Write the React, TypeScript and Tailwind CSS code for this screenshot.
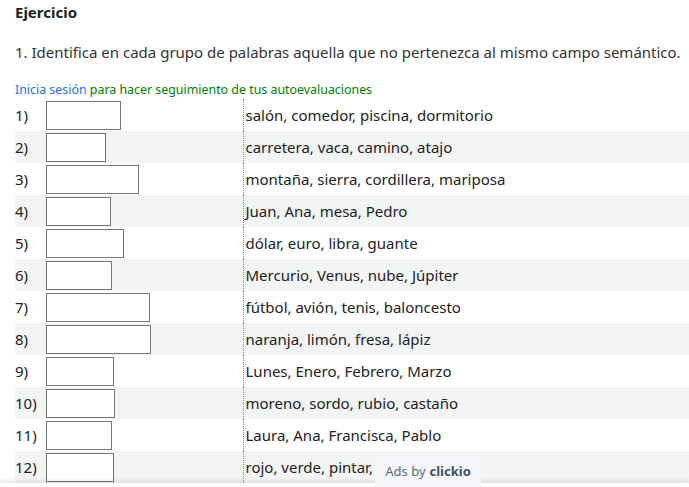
const rows: [number, string][] = [
  [75, "salón, comedor, piscina, dormitorio"],
  [60, "carretera, vaca, camino, atajo"],
  [93, "montaña, sierra, cordillera, mariposa"],
  [65, "Juan, Ana, mesa, Pedro"],
  [78, "dólar, euro, libra, guante"],
  [66, "Mercurio, Venus, nube, Júpiter"],
  [104, "fútbol, avión, tenis, baloncesto"],
  [105, "naranja, limón, fresa, lápiz"],
  [68, "Lunes, Enero, Febrero, Marzo"],
  [69, "moreno, sordo, rubio, castaño"],
  [66, "Laura, Ana, Francisca, Pablo"],
  [68, "rojo, verde, pintar,"],
];

export default function App() {
  return (
    <div className="relative h-[487px] overflow-hidden bg-white font-['Noto_Sans',sans-serif] text-[#222]">
      <div className="pl-[15px]">
        <h3 className="pt-[2px] text-[15px] font-bold leading-[20px]">Ejercicio</h3>
        <p className="mt-[20px] text-[15px] leading-[20px] text-[#333]">
          1. Identifica en cada grupo de palabras aquella que no pertenezca al mismo campo semántico.
        </p>
        <p className="mt-[20px] text-[12.4px] leading-[16px]">
          <a className="text-[#1a73e8]">Inicia sesión</a>{" "}
          <span className="text-[#008000]">para hacer seguimiento de tus autoevaluaciones</span>
        </p>
        <table className="mt-[1px] border-collapse text-[15px]">
          <tbody>
            {rows.map(([w, text], i) => (
              <tr key={i} className={i % 2 === 1 ? "h-[32px] bg-[#f2f5f4]" : "h-[32px]"}>
                <td className="w-[31px] p-0 align-middle leading-[20px]">{i + 1})</td>
                <td className="w-[197px] p-0 align-middle">
                  <input
                    type="text"
                    style={{ width: w }}
                    className="block h-[29px] border border-[#767676] bg-white"
                  />
                </td>
                <td className="w-[446px] border-l border-dotted border-[#888] pl-[2px] align-middle leading-[20px] whitespace-nowrap">
                  {text}
                </td>
              </tr>
            ))}
          </tbody>
        </table>
      </div>
      <div className="absolute bottom-0 left-0 right-0 h-[4px] bg-white shadow-[0_-2px_4px_rgba(0,0,0,0.12)]" />
      <div className="absolute bottom-0 left-[375px] flex h-[30px] w-[106px] items-center justify-center rounded-t-[5px] bg-[#f4f6f9] text-[13px] text-[#5c6c80]">
        Ads by <span className="ml-[4px] font-bold text-[#3f5068]">clickio</span>
      </div>
    </div>
  );
}
